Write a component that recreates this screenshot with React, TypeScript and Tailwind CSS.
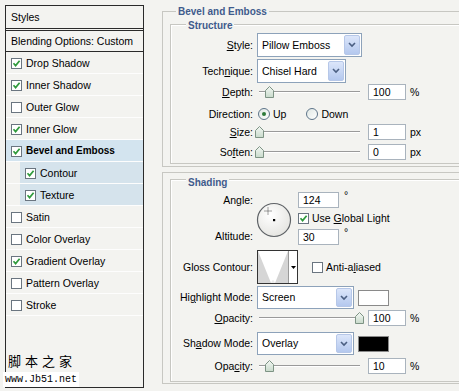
import React from 'react';

type Row = { label: string; on: boolean; bold?: boolean; sub?: boolean; hl?: boolean };

const rows: Row[] = [
  { label: 'Drop Shadow', on: true },
  { label: 'Inner Shadow', on: true },
  { label: 'Outer Glow', on: false },
  { label: 'Inner Glow', on: true },
  { label: 'Bevel and Emboss', on: true, bold: true, hl: true },
  { label: 'Contour', on: true, sub: true, hl: true },
  { label: 'Texture', on: true, sub: true, hl: true },
  { label: 'Satin', on: false },
  { label: 'Color Overlay', on: false },
  { label: 'Gradient Overlay', on: true },
  { label: 'Pattern Overlay', on: false },
  { label: 'Stroke', on: false },
];

function Check({ on }: { on: boolean }) {
  return (
    <span className="w-[11px] h-[11px] border border-[#6a7580] bg-white flex items-center justify-center shrink-0">
      {on && (
        <svg width="9" height="9" viewBox="0 0 9 9">
          <path d="M1.5 4.3 L3.6 6.6 L7.6 1.8" stroke="#2f9a3c" strokeWidth="1.7" fill="none" />
        </svg>
      )}
    </span>
  );
}

function Radio({ on }: { on: boolean }) {
  return (
    <span className="w-[12px] h-[12px] rounded-full border border-[#5d7489] bg-gradient-to-br from-[#dfe7e4] to-white flex items-center justify-center shrink-0">
      {on && <span className="w-[4px] h-[4px] rounded-full bg-[#2d7a3a]" />}
    </span>
  );
}

function Label({ children }: { children: React.ReactNode }) {
  return <div className="w-[82px] text-right shrink-0 whitespace-nowrap">{children}</div>;
}

function Arrow() {
  return (
    <span className="w-[16px] h-[calc(100%-2px)] rounded-[2px] border border-[#b6c7e8] bg-gradient-to-b from-[#dce6fa] to-[#b4c8ee] flex items-center justify-center shrink-0">
      <svg width="8" height="6" viewBox="0 0 8 6">
        <path d="M1 1 L4 4 L7 1" stroke="#4b5f82" strokeWidth="1.6" fill="none" />
      </svg>
    </span>
  );
}

function Select({ value, w }: { value: string; w: string }) {
  return (
    <div className={`${w} h-full ml-[4px] border border-[#8da2ba] bg-white flex items-center justify-between pl-[4px] pr-[1px]`}>
      <span>{value}</span>
      <Arrow />
    </div>
  );
}

function Box({ value, w = 'w-[38px]' }: { value: string; w?: string }) {
  return (
    <div className={`${w} h-[16px] border border-[#a9b3bd] bg-white pl-[4px] flex items-center shrink-0`}>{value}</div>
  );
}

function Slider({ pct }: { pct: number }) {
  return (
    <div className="relative w-[105px] h-[16px] ml-[4px] shrink-0">
      <div className="absolute left-[2px] right-[2px] top-[7px] h-[2px] border-t border-[#9a9a9a] border-b border-b-white" />
      <svg
        className="absolute top-[2px]"
        style={{ left: 2 + pct - 4.5 }}
        width="9"
        height="12"
        viewBox="0 0 9 12"
      >
        <defs>
          <linearGradient id="th" x1="0" y1="0" x2="0" y2="1">
            <stop offset="0" stopColor="#f4f8f4" />
            <stop offset="1" stopColor="#c8dacb" />
          </linearGradient>
        </defs>
        <path d="M0.5 4.5 L4.5 0.5 L8.5 4.5 V11.5 H0.5 Z" fill="url(#th)" stroke="#7d9384" />
      </svg>
    </div>
  );
}

function SliderRow({ label, pct, value, unit, cls }: { label: React.ReactNode; pct: number; value: string; unit: string; cls: string }) {
  return (
    <div className={`flex items-center h-[16px] ${cls}`}>
      <Label>{label}</Label>
      <Slider pct={pct} />
      <div className="ml-[6px]">
        <Box value={value} />
      </div>
      <span className="ml-[4px]">{unit}</span>
    </div>
  );
}

export default function App() {
  return (
    <div className="relative w-[459px] h-[391px] overflow-hidden bg-[#f3f3f0] flex font-['Liberation_Sans',Arial,sans-serif] text-[10.5px] text-black leading-none">
      {/* left: style list */}
      <div className="ml-[5px] mt-[5px] w-[139px] h-[383px] border border-[#2a2a2a] flex flex-col shrink-0">
        <div className="h-[25px] flex items-center pl-[5px] pt-[1px] border-b-[3px] border-double border-[#2a2a2a]">Styles</div>
        <div className="h-[21px] flex items-center pl-[5px] pt-[1px] border-b border-[#2a2a2a]">Blending Options: Custom</div>
        {rows.map((r) => (
          <div key={r.label} className={`h-[22px] flex border-b border-[#fdfdfd] ${r.hl && !r.sub ? 'bg-[#d3e4ef]' : ''}`}>
            <div className={`flex-1 flex items-center gap-[4px] pl-[5px] pt-[1px] ${r.sub ? 'ml-[14px] bg-[#d5e3ec]' : ''}`}>
              <Check on={r.on} />
              <span className={r.bold ? 'font-bold text-[10px]' : ''}>{r.label}</span>
            </div>
          </div>
        ))}
      </div>

      {/* watermark */}
      <div className="absolute left-[8px] top-[354px] text-[13px] tracking-[4px] font-['Noto_Sans_CJK_SC',sans-serif]">脚本之家</div>
      <div className="absolute left-[3px] top-[372px] h-[15px] px-[2px] bg-white flex items-center text-[10px] font-['Liberation_Mono',monospace]">www.Jb51.net</div>

      {/* right: settings */}
      <div className="ml-[18px] w-[300px] flex flex-col shrink-0">
        <div className="relative mt-[11px] h-[156px] border border-[#c7c7c2] pl-[7px] pt-[12px]">
          <span className="absolute left-[13px] -top-[5px] px-[2px] bg-[#f3f3f0] font-bold text-[10px] text-[#3f5b8c]">Bevel and Emboss</span>
          <div className="relative h-[140px] border border-[#c7c7c2] shadow-[inset_1px_1px_0_#fff] pt-[8px] flex flex-col">
            <span className="absolute left-[15px] -top-[4px] px-[2px] bg-[#f3f3f0] font-bold text-[10px] text-[#3f5b8c]">Structure</span>
            <div className="flex items-center h-[24px]">
              <Label><u>S</u>tyle:</Label>
              <Select value="Pillow Emboss" w="w-[105px]" />
            </div>
            <div className="flex items-center h-[24px] mt-[2px]">
              <Label>Tech<u>n</u>ique:</Label>
              <Select value="Chisel Hard" w="w-[89px]" />
            </div>
            <SliderRow cls="mt-[1px]" label={<><u>D</u>epth:</>} pct={10} value="100" unit="%" />
            <div className="flex items-center h-[16px] mt-[6px]">
              <Label>Direction:</Label>
              <span className="ml-[5px]"><Radio on /></span>
              <span className="ml-[3px]">Up</span>
              <span className="ml-[20px]"><Radio on={false} /></span>
              <span className="ml-[3px]">Down</span>
            </div>
            <SliderRow cls="mt-[2px]" label={<><u>S</u>ize:</>} pct={0.5} value="1" unit="px" />
            <SliderRow cls="mt-[4px]" label={<>So<u>f</u>ten:</>} pct={0} value="0" unit="px" />
          </div>
        </div>

        <div className="relative mt-[5px] h-[212px] border border-[#c7c7c2] pl-[7px] pt-[6px]">
          <div className="relative h-[203px] border border-[#c7c7c2] shadow-[inset_1px_1px_0_#fff] pt-[10px] flex flex-col">
            <span className="absolute left-[15px] -top-[2px] px-[2px] bg-[#f3f3f0] font-bold text-[10px] text-[#3f5b8c]">Shading</span>
            <div className="flex h-[55px]">
              <div className="w-[82px] flex flex-col text-right shrink-0">
                <div className="h-[14px] mt-[3px] flex items-center justify-end">An<u>g</u>le:</div>
                <div className="h-[14px] mt-[22px] flex items-center justify-end">Altitude:</div>
              </div>
              <svg className="ml-[3px] mt-[12px] shrink-0" width="36" height="36" viewBox="0 0 36 36">
                <defs>
                  <radialGradient id="dial" cx="0.4" cy="0.35" r="0.7">
                    <stop offset="0" stopColor="#ffffff" />
                    <stop offset="1" stopColor="#e4e4e0" />
                  </radialGradient>
                </defs>
                <circle cx="18" cy="18" r="16.5" fill="url(#dial)" stroke="#5e6266" strokeWidth="1.2" />
                <path d="M12 5.5 V12.5 M8.5 9 H15.5" stroke="#333" strokeWidth="0.9" strokeDasharray="1 1" />
                <rect x="17" y="17" width="2.2" height="2.2" fill="#000" />
              </svg>
              <div className="ml-[6px] flex flex-col">
                <div className="flex mt-[2px]">
                  <Box value="124" w="w-[41px]" />
                  <span className="ml-[5px] -mt-[2px]">°</span>
                </div>
                <div className="flex items-center gap-[3px] h-[14px] mt-[3px]">
                  <Check on />
                  <span>Use <u>G</u>lobal Light</span>
                </div>
                <div className="flex mt-[4px]">
                  <Box value="30" w="w-[41px]" />
                  <span className="ml-[5px] -mt-[2px]">°</span>
                </div>
              </div>
            </div>

            <div className="flex items-center h-[34px] mt-[5px]">
              <Label>Gloss Contour:</Label>
              <div className="ml-[4px] w-[41px] h-[34px] border border-[#333] bg-white flex shrink-0">
                <svg width="30" height="32" viewBox="0 0 30 32" className="shrink-0">
                  <path d="M0 0 L13 32 L0 32 Z" fill="#d6d6d6" />
                  <path d="M30 0 L17 32 L30 32 Z" fill="#d6d6d6" />
                  <path d="M13 32 Q15 26 17 32 Z" fill="#ececec" />
                </svg>
                <div className="flex-1 border-l border-[#999] flex items-center justify-center">
                  <svg width="5" height="3" viewBox="0 0 5 3"><path d="M0 0 H5 L2.5 3 Z" fill="#000" /></svg>
                </div>
              </div>
              <div className="ml-[14px] flex items-center gap-[3px]">
                <Check on={false} />
                <span>Anti-a<u>l</u>iased</span>
              </div>
            </div>

            <div className="flex items-center h-[23px] mt-[2px]">
              <Label>Hi<u>g</u>hlight Mode:</Label>
              <Select value="Screen" w="w-[97px]" />
              <div className="ml-[4px] w-[31px] h-[16px] border border-[#8a8a8a] bg-white" />
            </div>
            <SliderRow cls="mt-[1px]" label={<><u>O</u>pacity:</>} pct={100} value="100" unit="%" />
            <div className="flex items-center h-[23px] mt-[6px]">
              <Label>Sh<u>a</u>dow Mode:</Label>
              <Select value="Overlay" w="w-[97px]" />
              <div className="ml-[4px] w-[31px] h-[16px] border border-[#8a8a8a] bg-black" />
            </div>
            <SliderRow cls="mt-[3px]" label={<>Opa<u>c</u>ity:</>} pct={10} value="10" unit="%" />
          </div>
        </div>
      </div>
    </div>
  );
}
